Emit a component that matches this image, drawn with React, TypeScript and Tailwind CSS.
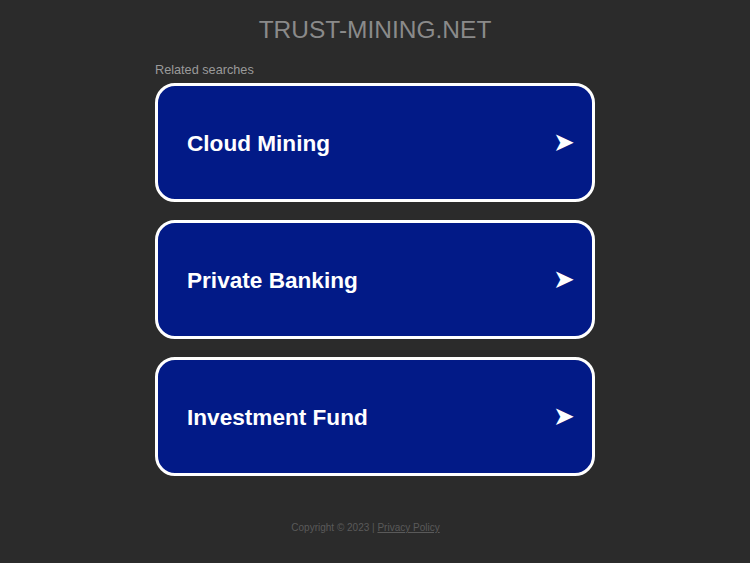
const items = ["Cloud Mining", "Private Banking", "Investment Fund"]

export default function App() {
  return (
    <div className="min-h-[563px] bg-[#2b2b2b] font-['Liberation_Sans',Arial,sans-serif]">
      <div className="mx-auto w-[440px] pt-[15px]">
        <h1 className="text-center text-[24.5px] leading-[30px] text-[#8a8a8a]">TRUST-MINING.NET</h1>
        <p className="mt-[17px] text-[12.7px] leading-[16px] text-[#9a9a9a]">Related searches</p>
        <div className="mt-[5px] flex flex-col gap-[18px]">
          {items.map((label) => (
            <a
              key={label}
              href="#"
              className="flex h-[119px] items-center justify-between rounded-[20px] border-[3px] border-white bg-[#021a87] pl-[29px] pr-[17px] text-white"
            >
              <span className="mt-[4px] text-[22.6px] font-bold leading-none">{label}</span>
              <span className="mb-[2px] text-[26px] leading-none">➤</span>
            </a>
          ))}
        </div>
        <p className="mt-[44px] pr-[19px] text-center text-[10px] text-[#5a5a5a]">
          Copyright © 2023 | <span className="underline">Privacy Policy</span>
        </p>
      </div>
    </div>
  )
}
